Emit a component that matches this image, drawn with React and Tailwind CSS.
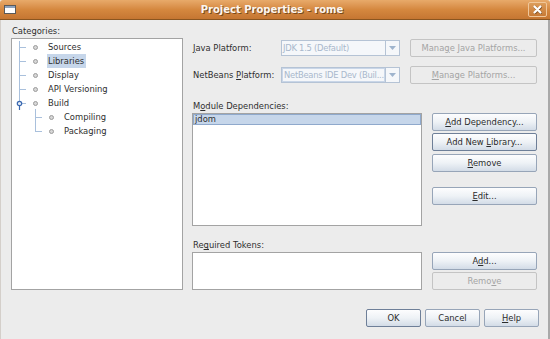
import clsx from "clsx";

const FONT = { fontFamily: '"DejaVu Sans", "Liberation Sans", sans-serif' };

// underline the mnemonic letter at index i
const Mn = ({ text, i }) => {
  if (i === undefined || i < 0) return text;
  return (
    <>
      {text.slice(0, i)}
      <span className="underline underline-offset-[1px]">{text[i]}</span>
      {text.slice(i + 1)}
    </>
  );
};

const Btn = ({ text, i, disabled, strong, className }) => (
  <div
    className={clsx(
      "flex h-[18px] items-center justify-center rounded-[2px] border leading-none",
      disabled
        ? "border-[#c4c4c4] bg-[#ececec] text-[#a4a4a4]"
        : "bg-gradient-to-b from-[#fdfdfe] via-[#eef2f6] to-[#d3dce7] text-[#2b2b2b]",
      !disabled && (strong ? "border-[#6e7f98]" : "border-[#97a5b8]"),
      className
    )}
  >
    <span>
      <Mn text={text} i={i} />
    </span>
  </div>
);

const Combo = ({ value, inner }) => (
  <div className="flex h-[16px] w-[119px] border border-[#b5c3d5] bg-[#f5f7fa]">
    <div
      className={clsx(
        "flex min-w-0 flex-1 items-center overflow-hidden whitespace-nowrap pl-px leading-none tracking-[-0.25px] text-[#a8b8cc]",
        inner && "border border-[#c9d6e8] pl-0"
      )}
    >
      {value}
    </div>
    <div className="flex w-[14px] shrink-0 items-center justify-center border-l border-[#b5c3d5]">
      <svg width="7" height="4" viewBox="0 0 7 4">
        <path d="M0 0 H7 L3.5 4 Z" fill="#9fb4cd" />
      </svg>
    </div>
  </div>
);

const TREE = [
  { label: "Sources", level: 1 },
  { label: "Libraries", level: 1, selected: true },
  { label: "Display", level: 1 },
  { label: "API Versioning", level: 1 },
  { label: "Build", level: 1 },
  { label: "Compiling", level: 2 },
  { label: "Packaging", level: 2 },
];

const TreeLines = () => (
  <svg className="pointer-events-none absolute left-0 top-0" width="60" height="110">
    <g stroke="#a9c0dc" strokeWidth="1" shapeRendering="crispEdges">
      <line x1="7.5" y1="2" x2="7.5" y2="62" />
      <line x1="7.5" y1="8.5" x2="14" y2="8.5" />
      <line x1="7.5" y1="22.5" x2="14" y2="22.5" />
      <line x1="7.5" y1="36.5" x2="14" y2="36.5" />
      <line x1="7.5" y1="50.5" x2="14" y2="50.5" />
      <line x1="10" y1="64.5" x2="14" y2="64.5" />
      <line x1="23.5" y1="70" x2="23.5" y2="92.5" />
      <line x1="23.5" y1="78.5" x2="30" y2="78.5" />
      <line x1="23.5" y1="92.5" x2="30" y2="92.5" />
    </g>
    <circle cx="7.5" cy="64.5" r="2.2" fill="#e4ecf7" stroke="#3a68b0" strokeWidth="1.2" />
    <line x1="7.5" y1="66.8" x2="7.5" y2="71" stroke="#3a68b0" strokeWidth="1.2" />
  </svg>
);

export default function App() {
  return (
    <div className="flex h-[339px] w-[550px] flex-col overflow-hidden bg-[#ececec] text-[8.4px] text-[#2e2e2e]" style={FONT}>
      {/* title bar */}
      <div className="flex h-[20px] shrink-0 items-center rounded-t-[3px] border-b border-[#8a5520] bg-gradient-to-b from-[#e8aa6a] via-[#d5883f] to-[#c57632] pl-[4px] pr-[3px]">
        <div className="h-[9px] w-[12px] border border-[#5a5a5a] bg-white">
          <div className="h-[2px] bg-[#8ea3bd]" />
        </div>
        <div className="flex-1 text-center text-[10px] font-bold leading-none text-[#fbf6f0] [text-shadow:1px_1px_0_#7a4a1c]">
          Project Properties - rome
        </div>
        <div className="flex h-[15px] w-[19px] items-center justify-center rounded-[2px] border border-[#f0c79a] bg-gradient-to-b from-[#dc9c5a] to-[#c77a35]">
          <svg width="9" height="9" viewBox="0 0 9 9">
            <path d="M1.5 1.5 L7.5 7.5 M7.5 1.5 L1.5 7.5" stroke="#7a4a1c" strokeWidth="2.6" strokeLinecap="round" transform="translate(0.5 0.5)" />
            <path d="M1.5 1.5 L7.5 7.5 M7.5 1.5 L1.5 7.5" stroke="#ffffff" strokeWidth="2.2" strokeLinecap="round" />
          </svg>
        </div>
      </div>

      {/* body */}
      <div className="flex flex-1 flex-col border-l border-r-2 border-l-[#d4cfca] border-r-[#a9a9a9]">
        <div className="flex">
          {/* categories */}
          <div className="ml-[10px] flex w-[172px] flex-col">
            <div className="mt-[5px] flex h-[13px] items-center pl-px leading-none">Categories:</div>
            <div className="relative h-[252px] border border-[#a3a3a3] bg-white pt-px">
              <TreeLines />
              {TREE.map((item) => (
                <div
                  key={item.label}
                  className={clsx("flex h-[14px] items-center", item.level === 1 ? "pl-[21px]" : "pl-[37px]")}
                >
                  <span className="h-[5px] w-[5px] rounded-full border border-[#9c9c9c] bg-[#d6d6d6]" />
                  <span
                    className={clsx(
                      "ml-[9px] flex h-[14px] items-center px-px pr-[2px] leading-none",
                      item.selected && "bg-[#c6d6ea]"
                    )}
                  >
                    {item.label}
                  </span>
                </div>
              ))}
            </div>
          </div>

          {/* properties */}
          <div className="ml-[9px] flex w-[345px] flex-col pt-[20px]">
            <div className="flex h-[16px] items-center">
              <div className="w-[89px] pl-px leading-none">
                <Mn text="Java Platform:" i={0} />
              </div>
              <Combo value="JDK 1.5 (Default)" />
              <Btn text="Manage Java Platforms..." i={4} disabled className="ml-[10px] h-[16px] w-[127px]" />
            </div>
            <div className="mt-[11px] flex h-[16px] items-center">
              <div className="w-[89px] pl-px leading-none">
                <Mn text="NetBeans Platform:" i={9} />
              </div>
              <Combo value="NetBeans IDE Dev (Buil..." inner />
              <Btn text="Manage Platforms..." i={0} disabled className="ml-[10px] h-[16px] w-[127px]" />
            </div>

            <div className="mt-[17px] flex h-[13px] items-center pl-px leading-none">
              <Mn text="Module Dependencies:" i={1} />
            </div>
            <div className="flex">
              <div className="h-[113px] w-[230px] border border-[#a3a3a3] bg-white">
                <div className="flex h-[11px] items-center border border-[#8fa9cc] bg-[#c6d6ea] pl-px leading-none">
                  jdom
                </div>
              </div>
              <div className="ml-[10px] flex w-[105px] flex-col">
                <Btn text="Add Dependency..." i={0} />
                <Btn text="Add New Library..." i={8} strong className="mt-[2px]" />
                <Btn text="Remove" i={0} className="mt-[3px]" />
                <Btn text="Edit..." i={0} className="mt-[15px]" />
              </div>
            </div>

            <div className="mt-[13px] flex h-[13px] items-center pl-px leading-none">
              <Mn text="Required Tokens:" i={2} />
            </div>
            <div className="flex">
              <div className="h-[38px] w-[230px] border border-[#a3a3a3] bg-white" />
              <div className="ml-[10px] flex w-[105px] flex-col">
                <Btn text="Add..." i={1} />
                <Btn text="Remove" i={4} disabled className="mt-[2px]" />
              </div>
            </div>
          </div>
        </div>

        {/* dialog buttons */}
        <div className="mt-[19px] flex justify-end gap-[4px] pr-[9px]">
          <Btn text="OK" strong className="w-[55px]" />
          <Btn text="Cancel" className="w-[55px]" />
          <Btn text="Help" i={0} className="w-[55px]" />
        </div>
      </div>
    </div>
  );
}
